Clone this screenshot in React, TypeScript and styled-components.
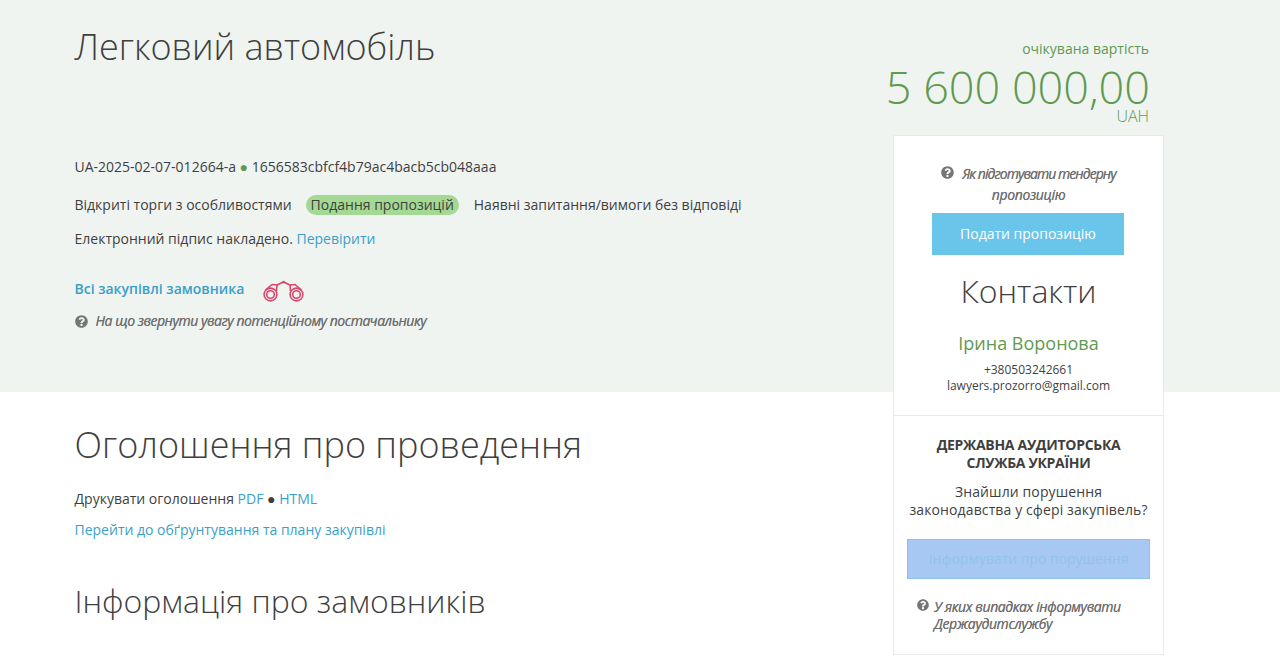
import React, { FC } from "react";
import styled, { createGlobalStyle } from "styled-components";

const GlobalStyle = createGlobalStyle`
  html, body {
    margin: 0;
    padding: 0;
    height: 656px;
    overflow: hidden;
    background: #fff;
    font-family: "Open Sans", sans-serif;
    color: #3f3f3f;
  }
`;

const Page = styled.div`
  position: relative;
  width: 1280px;
  height: 656px;
  overflow: hidden;
`;

const Hero = styled.section`
  height: 392px;
  background: #f0f4f1;
  padding: 0 0 0 74.5px;
  box-sizing: border-box;
  display: flex;
`;

const HeroMain = styled.div`
  width: 800px;
`;

const Title = styled.h1`
  margin: 24px 0 0;
  font-size: 36px;
  line-height: 46px;
  font-weight: 300;
  height: 124px;
`;

const Line = styled.div<{ $mt?: number }>`
  margin-top: ${(p) => p.$mt ?? 0}px;
  font-size: 14px;
  line-height: 20px;
`;

const Dot = styled.span`
  color: #5c9a4f;
`;

const Link = styled.a`
  color: #3a9fc9;
`;

const Status = styled.span`
  display: inline-block;
  background: #a3d993;
  border-radius: 10px;
  padding: 0 5px;
  margin: 0 15px 0 14px;
`;

const CustomerRow = styled.div`
  margin-top: 31px;
  height: 22px;
  display: flex;
  align-items: flex-start;
  gap: 19px;
`;

const CustomerLink = styled(Link)`
  font-size: 14px;
  line-height: 18px;
  font-weight: 600;
`;

const Help = styled.div<{ $mt?: number }>`
  margin-top: ${(p) => p.$mt ?? 0}px;
  font-size: 14px;
  line-height: 20px;
  font-style: italic;
  font-weight: 400;
  letter-spacing: -0.47px;
  color: #717171;
  text-shadow: 0 0 0.6px #717171;
  display: flex;
  align-items: center;
`;

const HelpIcon = styled.svg<{ $gap: number }>`
  flex: none;
  margin-right: ${(p) => p.$gap}px;
  fill: #757575;
`;

const Price = styled.div`
  flex: 1;
  padding: 39px 131px 0 0;
  text-align: right;
  color: #5f9a50;
`;

const PriceLabel = styled.div`
  font-size: 14px;
  line-height: 20px;
`;

const PriceValue = styled.div`
  margin: 6px -1px 1px 0;
  font-size: 45px;
  line-height: 44px;
  font-weight: 300;
`;

const Currency = styled.div`
  font-size: 16px;
  line-height: 12px;
  font-weight: 300;
`;

const Body = styled.section`
  padding: 30px 0 0 74.5px;
`;

const SectionTitle = styled.h2`
  margin: 0;
  font-size: 36px;
  line-height: 46px;
  font-weight: 300;
`;

const SubTitle = styled.h2`
  margin: 40px 0 0;
  font-size: 32px;
  line-height: 42px;
  font-weight: 300;
`;

const FieldLabel = styled.div`
  margin-top: 29px;
  font-size: 14px;
  line-height: 20px;
`;

const Aside = styled.aside`
  position: absolute;
  left: 893px;
  top: 135px;
  width: 271px;
  height: 560px;
  box-sizing: border-box;
  background: #fff;
  border: 1px solid #e8ece9;
  text-align: center;
`;

const ContactBlock = styled.div`
  padding: 27px 13px 21px;
  border-bottom: 1px solid #e8ece9;
`;

const AuditBlock = styled.div`
  padding: 20px 13px 22px;
  border-bottom: 1px solid #e8ece9;
`;

const CenteredHelp = styled(Help)`
  display: block;
  line-height: 21px;
  letter-spacing: -0.35px;
  svg {
    vertical-align: 0;
  }
  &::first-line {
    letter-spacing: -0.95px;
  }
`;

const AuditHelp = styled(Help)`
  margin-top: 19px;
  padding-left: 10px;
  line-height: 17px;
  letter-spacing: -0.4px;
  align-items: flex-start;
  text-align: left;
  svg {
    margin-top: 1px;
  }
`;

const PrimaryButton = styled.div`
  width: 192px;
  height: 42px;
  line-height: 42px;
  margin: 8px 0 0 25px;
  background: #6ac5ea;
  color: #fff;
  font-size: 14px;
`;

const ContactsTitle = styled.div`
  font-size: 32px;
  line-height: 42px;
  font-weight: 300;
  margin-top: 15px;
`;

const Person = styled.div`
  font-size: 18px;
  line-height: 24px;
  color: #5f9a50;
  margin-top: 19px;
`;

const Phone = styled.div`
  margin-top: 7px;
  font-size: 12px;
  line-height: 16px;
`;

const Email = styled.div`
  font-size: 12px;
  line-height: 16px;
`;

const Audit = styled.div`
  font-size: 14px;
  line-height: 18px;
  font-weight: 700;
  letter-spacing: -0.3px;
`;

const AuditText = styled.div`
  font-size: 14px;
  line-height: 18px;
  letter-spacing: 0.12px;
  margin-top: 11px;
`;

const ReportButton = styled.div`
  height: 40px;
  line-height: 38px;
  box-sizing: border-box;
  margin-top: 20px;
  background: #a7c8f2;
  border: 1px solid #8fc0e8;
  color: #8fc4ee;
  font-size: 14px;
`;

const QuestionIcon: FC<{ size?: number; gap?: number }> = ({ size = 13, gap = 8 }) => (
  <HelpIcon width={size} height={size} viewBox="0 0 512 512" $gap={gap}>
    <path d="M504 256c0 137-111 248-248 248S8 393 8 256 119 8 256 8s248 111 248 248zM263 90c-54 0-89 23-116 64-4 5-3 12 3 16l35 26c5 4 13 3 17-2 18-23 30-36 58-36 21 0 46 13 46 33 0 15-12 23-33 34-23 14-55 31-55 73v6c0 7 5 12 12 12h56c7 0 12-5 12-12v-3c0-29 85-30 85-109 0-59-62-102-120-102zm-7 254c-26 0-47 21-47 47s21 47 47 47 47-21 47-47-21-47-47-47z" />
  </HelpIcon>
);

const Binoculars: FC = () => (
  <svg width="41" height="22" viewBox="0 0 41 22" fill="none" stroke="#d9466a" strokeWidth="1.6">
    <circle cx="7.5" cy="14.5" r="6.4" />
    <circle cx="7.5" cy="14.5" r="3.8" />
    <circle cx="33.5" cy="14.5" r="6.4" />
    <circle cx="33.5" cy="14.5" r="3.8" />
    <path d="M2.5 10 L9 4.5 L14 5 L13.5 11" />
    <path d="M38.5 10 L32 4.5 L27 5 L27.5 11" />
    <path d="M14 5 L20.5 2 L27 5" />
    <circle cx="20.5" cy="2" r="1.2" fill="#d9466a" stroke="none" />
  </svg>
);

export default function App() {
  return (
    <Page>
      <GlobalStyle />
      <Hero>
        <HeroMain>
          <Title>Легковий автомобіль</Title>
          <Line $mt={9}>
            UA-2025-02-07-012664-a <Dot>●</Dot> 1656583cbfcf4b79ac4bacb5cb048aaa
          </Line>
          <Line $mt={18}>
            Відкриті торги з особливостями
            <Status>Подання пропозицій</Status>
            Наявні запитання/вимоги без відповіді
          </Line>
          <Line $mt={14}>
            Електронний підпис накладено. <Link>Перевірити</Link>
          </Line>
          <CustomerRow>
            <CustomerLink>Всі закупівлі замовника</CustomerLink>
            <Binoculars />
          </CustomerRow>
          <Help $mt={9}>
            <QuestionIcon />
            На що звернути увагу потенційному постачальнику
          </Help>
        </HeroMain>
        <Price>
          <PriceLabel>очікувана вартість</PriceLabel>
          <PriceValue>5 600 000,00</PriceValue>
          <Currency>UAH</Currency>
        </Price>
      </Hero>
      <Body>
        <SectionTitle>Оголошення про проведення</SectionTitle>
        <Line $mt={21}>
          Друкувати оголошення <Link>PDF</Link> ● <Link>HTML</Link>
        </Line>
        <Line $mt={11}>
          <Link>Перейти до обґрунтування та плану закупівлі</Link>
        </Line>
        <SubTitle>Інформація про замовників</SubTitle>
        <FieldLabel>Організатор</FieldLabel>
      </Body>
      <Aside>
        <ContactBlock>
          <CenteredHelp>
            <QuestionIcon />
            Як підготувати тендерну пропозицію
          </CenteredHelp>
          <PrimaryButton>Подати пропозицію</PrimaryButton>
          <ContactsTitle>Контакти</ContactsTitle>
          <Person>Ірина Воронова</Person>
          <Phone>+380503242661</Phone>
          <Email>lawyers.prozorro@gmail.com</Email>
        </ContactBlock>
        <AuditBlock>
          <Audit>
            ДЕРЖАВНА АУДИТОРСЬКА
            <br />
            СЛУЖБА УКРАЇНИ
          </Audit>
          <AuditText>Знайшли порушення законодавства у сфері закупівель?</AuditText>
          <ReportButton>Інформувати про порушення</ReportButton>
          <AuditHelp>
            <QuestionIcon size={12} gap={5} />
            <span>У яких випадках інформувати Держаудитслужбу</span>
          </AuditHelp>
        </AuditBlock>
      </Aside>
    </Page>
  );
}
